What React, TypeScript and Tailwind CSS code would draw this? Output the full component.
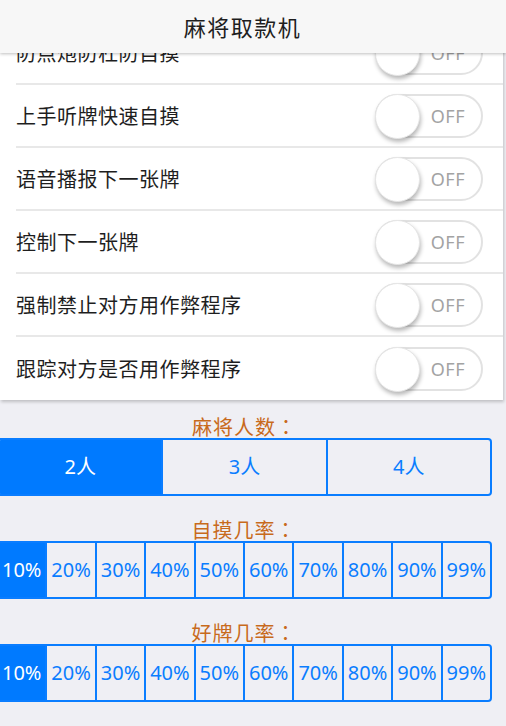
import React from "react";

const rows = [
  "防点炮防杠防自摸",
  "上手听牌快速自摸",
  "语音播报下一张牌",
  "控制下一张牌",
  "强制禁止对方用作弊程序",
  "跟踪对方是否用作弊程序",
];

const pcts = ["10%", "20%", "30%", "40%", "50%", "60%", "70%", "80%", "90%", "99%"];

const font = { fontFamily: '"Noto Sans", "Noto Sans CJK SC", sans-serif' };
const cjk = { fontFamily: '"Noto Sans CJK SC", sans-serif' };
const cjkTc = { fontFamily: '"Noto Sans CJK TC", sans-serif' };

function Toggle() {
  return (
    <div className="relative w-[108px] h-[44px] rounded-full border-2 border-[#e2e2e2] bg-white flex items-center justify-end pr-[16px]">
      <span className="text-[18px] text-[#a3a3a3] leading-none tracking-[0.5px]">OFF</span>
      <div className="absolute left-[-2px] top-[-2px] w-[45px] h-[45px] rounded-full bg-white border border-[#e6e6e6] shadow-[1px_3px_4px_rgba(0,0,0,0.28)]" />
    </div>
  );
}

function Segmented({ items, className }: { items: string[]; className: string }) {
  return (
    <div className={"flex h-[58px] border-2 border-[#0a7dff] rounded-[4px] overflow-hidden " + className}>
      {items.map((t, i) => (
        <div
          key={t}
          className={
            "flex-1 flex items-center justify-center text-[20px] " +
            (i > 0 ? "border-l-2 border-[#0a7dff] " : "") +
            (i === 0 ? "bg-[#007aff] text-white" : "text-[#0a7dff]")
          }
        >
          {t}
        </div>
      ))}
    </div>
  );
}

function Label({ text }: { text: string }) {
  return (
    <div className="h-[22px] leading-[22px] text-center text-[20px] text-[#c86a1c] tracking-[1px]" style={cjk}>
      {text}
      <span style={cjkTc}>：</span>
    </div>
  );
}

export default function App() {
  return (
    <div className="relative w-[506px] h-[726px] bg-[#efeff4] overflow-hidden" style={font}>
      <div className="absolute top-0 left-0 right-0 z-10 h-[53px] bg-[#f7f7f7] shadow-[0_1px_3px_rgba(0,0,0,0.25)] flex items-center justify-center pr-[21px]">
        <span className="text-[22px] text-[#1e1e1e] tracking-[1.5px]" style={cjk}>麻将取款机</span>
      </div>
      <div className="pt-[22px]">
        <div className="w-[503px] bg-white shadow-[1px_2px_3px_rgba(0,0,0,0.2)]">
          {rows.map((r, i) => (
            <div key={r} className="pl-[16px]">
              <div
                className={
                  "h-[63px] flex items-center justify-between pr-[20px] " +
                  (i < rows.length - 1 ? "border-b-2 border-[#e8e8e8]" : "")
                }
              >
                <span className="text-[20px] text-[#1e1e1e] tracking-[0.5px]" style={cjk}>{r}</span>
                <Toggle />
              </div>
            </div>
          ))}
        </div>
        <div className="mt-[16px] ml-[-3px] w-[495px]">
          <Label text="麻将人数" />
          <Segmented items={["2人", "3人", "4人"]} className="w-[495px]" />
        </div>
        <div className="mt-[23px] ml-[-4px] w-[496px]">
          <Label text="自摸几率" />
          <Segmented items={pcts} className="w-[496px]" />
        </div>
        <div className="mt-[23px] ml-[-4px] w-[496px]">
          <Label text="好牌几率" />
          <Segmented items={pcts} className="w-[496px]" />
        </div>
      </div>
    </div>
  );
}
